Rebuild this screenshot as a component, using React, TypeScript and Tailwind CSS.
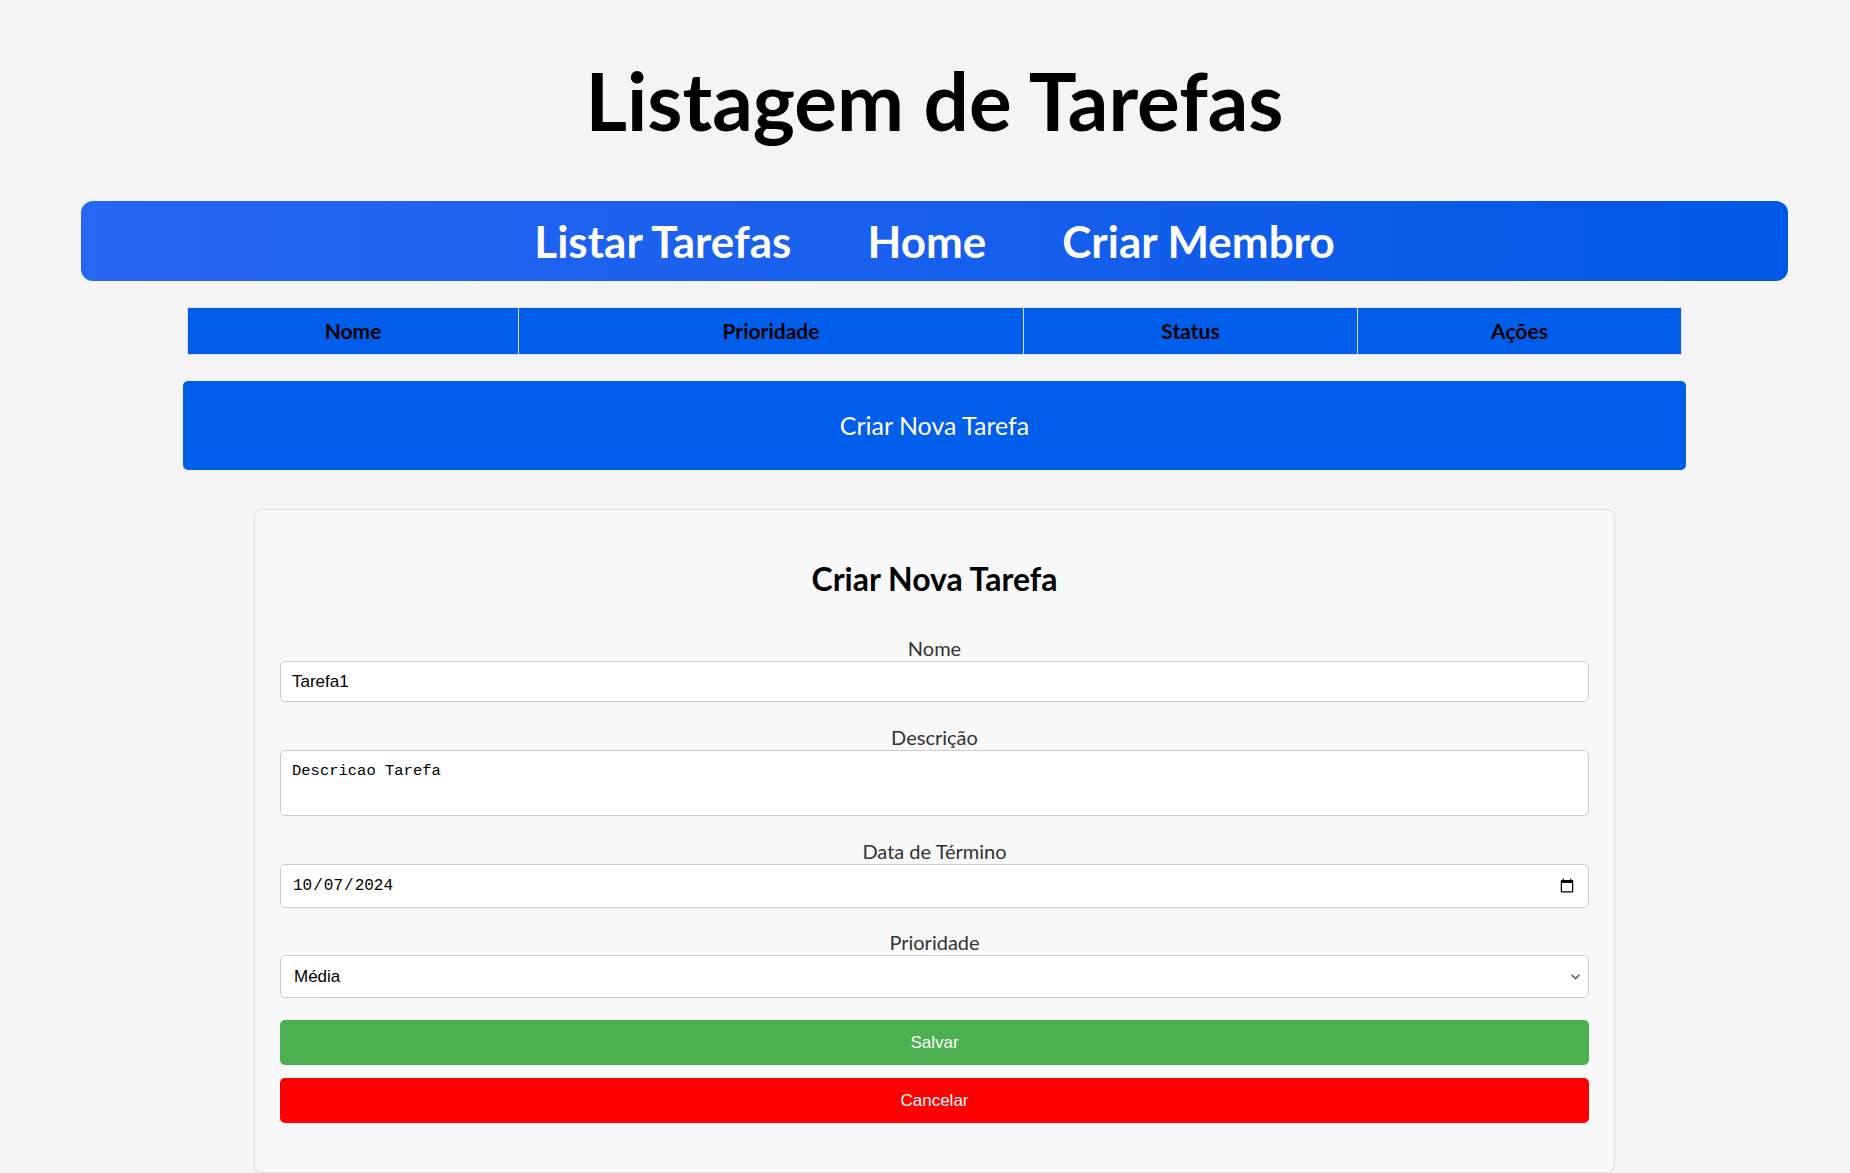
export default function App() {
  const sans = "font-['Lato','Open_Sans',sans-serif]";
  const arial = "font-['Liberation_Sans',Arial,sans-serif]";

  return (
    <div className={`min-h-screen bg-[#f4f4f4] pl-[19px] text-black ${sans}`}>
      <h1 className="pt-[60px] text-center text-[80px] font-bold leading-[80px]">Listagem de Tarefas</h1>

      <nav className="mx-[62px] mt-[61px] flex h-[80px] items-center justify-center rounded-[12px] bg-gradient-to-r from-[#2566f2] to-[#0058e6]">
        {["Listar Tarefas", "Home", "Criar Membro"].map((item) => (
          <a key={item} href="#" className="mx-[38px] text-[44px] font-bold leading-[56px] text-white">
            {item}
          </a>
        ))}
      </nav>

      <div className="mx-[168px] mt-[26px]">
        <table className="w-full border-collapse border border-[#ccc]">
          <thead>
            <tr className="h-[47px] bg-[#005eeb] text-[21px] font-bold">
              <th className="w-[331px] border border-[#ddd]">Nome</th>
              <th className="w-[505px] border border-[#ddd]">Prioridade</th>
              <th className="w-[334px] border border-[#ddd]">Status</th>
              <th className="border border-[#ddd]">Ações</th>
            </tr>
          </thead>
        </table>
      </div>

      <div className="mx-[164px] mt-[26px]">
        <button className="h-[89px] w-full rounded-[5px] bg-[#005eeb] text-[25px] text-white">Criar Nova Tarefa</button>
      </div>

      <div className="mx-[235px] mt-[39px] rounded-[8px] border border-[#ddd] bg-[#f8f8f8] px-[25px] pb-[49px] pt-[49px]">
        <h2 className="text-center text-[32px] font-bold leading-[40px]">Criar Nova Tarefa</h2>

        <form className="mt-[36px] flex flex-col">
          <label className="text-center text-[20px] leading-[26px] text-[#333]">Nome</label>
          <input
            defaultValue="Tarefa1"
            className={`h-[41px] rounded-[5px] border border-[#ccc] bg-white px-[11px] text-[17px] ${arial}`}
          />

          <label className="mt-[22px] text-center text-[20px] leading-[26px] text-[#333]">Descrição</label>
          <textarea
            defaultValue="Descricao Tarefa"
            className="h-[66px] resize-none rounded-[5px] border border-[#ccc] bg-white px-[11px] pb-[6px] pt-[9px] font-['Liberation_Mono',monospace] text-[15.5px]"
          />

          <label className="mt-[22px] text-center text-[20px] leading-[26px] text-[#333]">Data de Término</label>
          <input
            type="date"
            defaultValue="2024-10-07"
            className="h-[44px] rounded-[5px] border border-[#ccc] bg-white px-[11px] font-['Liberation_Mono',monospace] text-[16px]"
          />

          <label className="mt-[21px] text-center text-[20px] leading-[26px] text-[#333]">Prioridade</label>
          <div className="relative">
            <select
              defaultValue="media"
              className={`h-[43px] w-full appearance-none rounded-[5px] border border-[#ccc] bg-white px-[13px] text-[17px] ${arial}`}
            >
              <option value="baixa">Baixa</option>
              <option value="media">Média</option>
              <option value="alta">Alta</option>
            </select>
            <svg className="pointer-events-none absolute right-[8px] top-[16px] h-[11px] w-[11px]" viewBox="0 0 10 10" fill="none">
              <path d="M1.5 3.5 5 7l3.5-3.5" stroke="#666" strokeWidth="1.5" />
            </svg>
          </div>

          <button type="button" className={`mt-[22px] h-[45px] rounded-[5px] bg-[#4caf50] text-[17px] text-white ${arial}`}>
            Salvar
          </button>
          <button type="button" className={`mt-[13px] h-[45px] rounded-[5px] bg-[#ff0000] text-[17px] text-white ${arial}`}>
            Cancelar
          </button>
        </form>
      </div>
    </div>
  );
}
